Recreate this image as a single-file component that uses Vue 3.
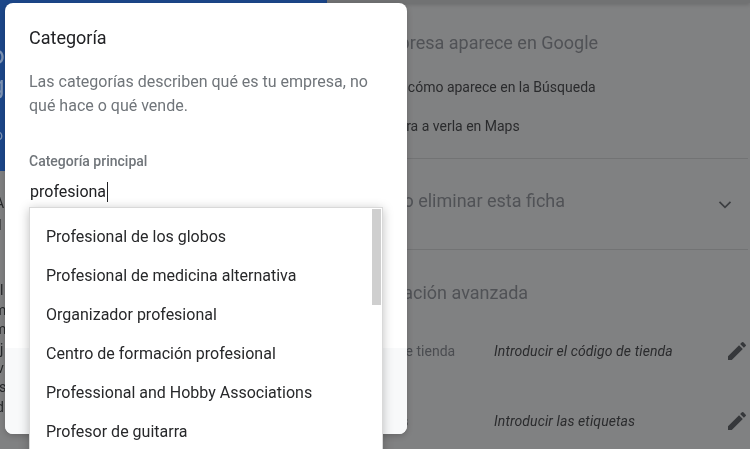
<script setup>
const options = [
  'Profesional de los globos',
  'Profesional de medicina alternativa',
  'Organizador profesional',
  'Centro de formación profesional',
  'Professional and Hobby Associations',
  'Profesor de guitarra'
]
const fields = [
  { label: 'Código de tienda', value: 'Introducir el código de tienda' },
  { label: 'Etiquetas', value: 'Introducir las etiquetas' }
]
const strip = [
  { t: 'A', c: 'a1' }, { t: 'I', c: 'a2' }, { t: 'l', c: 'a3' }, { t: 'm', c: 'a4' },
  { t: 'm', c: 'a5' }, { t: 'j', c: 'a6' }, { t: 'v', c: 'a7' }, { t: 's', c: 'a8' }, { t: 'd', c: 'a9' }
]
</script>

<template>
  <div class="page">
    <div class="backdrop">
      <aside class="left">
        <div class="hero">
          <span class="hero-a">o</span>
          <span class="hero-b">g</span>
          <span class="hero-c">o</span>
        </div>
        <div class="left-body">
          <span v-for="(s, i) in strip" :key="i" :class="['frag', s.c]">{{ s.t }}</span>
        </div>
      </aside>
      <main class="right">
        <div class="topbar"></div>
        <section class="sec first">
          <h2>Tu empresa aparece en Google</h2>
          <p class="link l1">Consulta cómo aparece en la Búsqueda</p>
          <p class="link l2">Entra ahora a verla en Maps</p>
        </section>
        <section class="sec second">
          <h2>Cerrar o eliminar esta ficha</h2>
          <svg class="chev" width="14" height="10" viewBox="0 0 14 10"><path d="M1.5 1.8 7 7.3l5.5-5.5" fill="none" stroke="#3c3e41" stroke-width="1.7"/></svg>
        </section>
        <section class="third">
          <h2>Información avanzada</h2>
          <div v-for="f in fields" :key="f.label" class="row">
            <span class="lbl">{{ f.label }}</span>
            <span class="val">{{ f.value }}</span>
            <svg class="pen" width="24" height="24" viewBox="0 0 24 24"><path d="M3 17.25V21h3.75L17.81 9.94l-3.75-3.75L3 17.25zM20.71 7.04a1 1 0 0 0 0-1.41l-2.34-2.34a1 1 0 0 0-1.41 0l-1.83 1.83 3.75 3.75 1.83-1.83z" fill="#36383b"/></svg>
          </div>
        </section>
      </main>
    </div>

    <div class="dialog">
      <div class="dialog-body">
        <h1>Categoría</h1>
        <p class="desc">Las categorías describen qué es tu empresa, no qué hace o qué vende.</p>
        <div class="field-label">Categoría principal</div>
        <div class="input"><span class="typed">profesiona</span></div>
      </div>
      <div class="dialog-foot"></div>
    </div>

    <div class="dropdown">
      <ul>
        <li v-for="o in options" :key="o">{{ o }}</li>
      </ul>
      <div class="thumb"></div>
    </div>
  </div>
</template>

<style>
html, body { margin: 0; background: #808182; }
</style>

<style scoped>
.page {
  position: relative;
  width: 750px;
  height: 449px;
  overflow: hidden;
  background: #808182;
  font-family: Roboto, "Liberation Sans", sans-serif;
  filter: blur(0.3px);
}
.backdrop { display: flex; height: 449px; }
.left { width: 327px; flex: none; display: flex; flex-direction: column; }
.hero {
  position: relative;
  height: 171px;
  background: #1c478a;
  color: #7f95b5;
  font-size: 26px;
}
.hero span { position: absolute; left: -10px; line-height: 30px; }
.hero-a { top: 40px; }
.hero-b { top: 70px; }
.hero-c { top: 120px; font-size: 14px; left: -5px !important; }
.left-body { position: relative; flex: 1; color: #26282a; font-size: 14px; }
.frag { position: absolute; left: 0; line-height: 16px; }
.a1 { top: 24px; left: -5px; }
.a2 { top: 46px; left: -2px; }
.a3 { top: 111px; left: 0; }
.a4 { top: 131px; left: -6px; }
.a5 { top: 150px; left: -6px; }
.a6 { top: 170px; left: 0; }
.a7 { top: 189px; left: -3px; }
.a8 { top: 208px; left: -1px; }
.a9 { top: 228px; left: -4px; }

.right { flex: 1; position: relative; padding-left: 23px; color: #2a2b2d; }
.topbar {
  position: absolute;
  top: 0; left: 0; right: 0;
  height: 3px;
  background: #717273;
  box-shadow: 0 1px 4px rgba(0,0,0,.25);
}
h2 { margin: 0; font-size: 18px; font-weight: 400; line-height: 24px; color: #505256; }
.sec { border-bottom: 1px solid #727374; margin-right: 2px; }
.first { padding-top: 31px; box-sizing: border-box; height: 159px; }
.link { margin: 0; font-size: 14px; line-height: 20px; }
.l1 { margin-top: 22px; margin-left: -1px; }
.l2 { margin-top: 19px; margin-left: -3px; }
.second { position: relative; height: 91px; box-sizing: border-box; padding-top: 30px; display: flex; justify-content: space-between; }
.chev { margin: 11px 16px 0 0; }
.third { padding-top: 31px; }
.row { display: flex; align-items: center; height: 24px; margin-top: 46px; font-size: 14px; }
.third h2 + .row { margin-top: 34px; }
.lbl { width: 144px; flex: none; color: #4a4c50; }
.val { flex: 1; font-style: italic; letter-spacing: .1px; }
.pen { flex: none; margin-right: 1px; }

.dialog {
  position: absolute;
  left: 5px; top: 3px;
  width: 402px; height: 431px;
  background: #fff;
  border-radius: 8px;
  display: flex;
  flex-direction: column;
  overflow: hidden;
  box-shadow: 0 2px 6px rgba(0,0,0,.2);
}
.dialog-body { flex: 1; padding: 24px 24px 0; }
.dialog-foot { height: 86px; background: #f8f9fa; }
h1 { margin: 0; font-size: 18px; font-weight: 400; line-height: 22px; color: #202124; }
.desc { margin: 21px 0 0; font-size: 16px; line-height: 24px; color: #70757a; }
.field-label { margin-top: 34px; font-size: 14px; font-weight: 500; line-height: 18px; color: #70757a; }
.input { margin-top: 12px; padding-left: 1px; font-size: 16px; line-height: 20px; color: #202124; }
.typed { border-right: 1px solid #202124; padding-right: 1px; display: inline-block; }

.dropdown {
  position: absolute;
  left: 29px; top: 207px;
  width: 354px; height: 260px;
  box-sizing: border-box;
  background: #fff;
  border: 1px solid #d9d9d9;
  box-shadow: 0 2px 10px rgba(0,0,0,.25);
}
ul { list-style: none; margin: 0; padding: 9px 0 0 16px; }
li { height: 39px; line-height: 39px; font-size: 16px; color: #27282a; }
.thumb { position: absolute; top: 1px; right: 1px; width: 9px; height: 96px; background: #cfcfcf; }
</style>
